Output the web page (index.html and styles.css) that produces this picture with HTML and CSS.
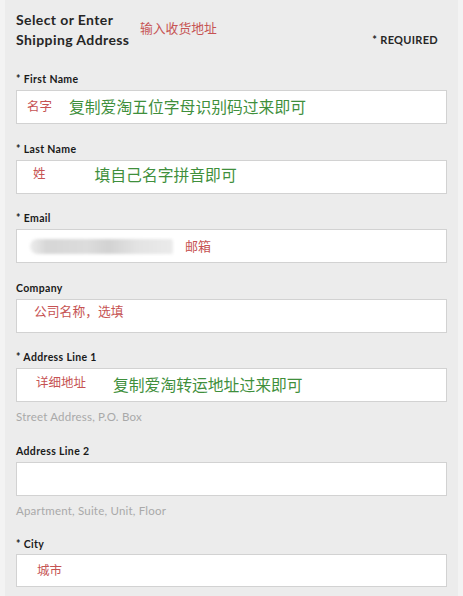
FILE: index.html
```html
<!DOCTYPE html>
<html lang="en">
<head>
<meta charset="utf-8">
<title>Shipping Address</title>
<link rel="stylesheet" href="styles.css">
</head>
<body>
<div class="panel">
  <div class="head">
    <div class="title">Select or Enter<br>Shipping Address</div>
    <span class="note head-note">输入收货地址</span>
    <span class="required">* REQUIRED</span>
  </div>

  <div class="field first">
    <div class="label">* First Name</div>
    <div class="box">
      <span class="note n-first">名字</span>
      <span class="tip t-first">复制爱淘五位字母识别码过来即可</span>
    </div>
  </div>

  <div class="field">
    <div class="label">* Last Name</div>
    <div class="box">
      <span class="note n-last">姓</span>
      <span class="tip t-last">填自己名字拼音即可</span>
    </div>
  </div>

  <div class="field">
    <div class="label">* Email</div>
    <div class="box">
      <span class="blurred"></span>
      <span class="note n-email">邮箱</span>
    </div>
  </div>

  <div class="field">
    <div class="label">Company</div>
    <div class="box">
      <span class="note n-company">公司名称，选填</span>
    </div>
  </div>

  <div class="field">
    <div class="label">* Address Line 1</div>
    <div class="box">
      <span class="note n-addr">详细地址</span>
      <span class="tip t-addr">复制爱淘转运地址过来即可</span>
    </div>
    <div class="hint">Street Address, P.O. Box</div>
  </div>

  <div class="field after-hint">
    <div class="label">Address Line 2</div>
    <div class="box"></div>
    <div class="hint">Apartment, Suite, Unit, Floor</div>
  </div>

  <div class="field after-hint last">
    <div class="label">* City</div>
    <div class="box">
      <span class="note n-city">城市</span>
    </div>
  </div>
</div>
</body>
</html>
```
FILE: styles.css
```css
* { box-sizing: border-box; }

html, body {
  margin: 0;
  padding: 0;
  background: #f3f3f3;
}

body {
  font-family: Lato, "Liberation Sans", "Noto Sans CJK SC", sans-serif;
  color: #1c1c1c;
  height: 596px;
  overflow: hidden;
}

.panel {
  margin: 0 5px;
  background: #ececec;
  padding: 10px 11px 20px;
  min-height: 596px;
}

.head {
  display: flex;
  align-items: flex-start;
  height: 40px;
}

.title {
  font-size: 14px;
  font-weight: 700;
  line-height: 20px;
  letter-spacing: 0.4px;
  color: #262626;
  width: 124px;
  white-space: nowrap;
}

.note {
  font-family: "Noto Sans CJK SC", sans-serif;
  color: #c65353;
  font-size: 12.5px;
  line-height: 16px;
}

.tip {
  font-family: "Noto Sans CJK SC", sans-serif;
  color: #3f8f3c;
  font-size: 15.8px;
  line-height: 20px;
}

.head-note {
  margin-top: 10px;
  font-size: 12.8px;
}

.required {
  margin-left: auto;
  margin-top: 23px;
  margin-right: 9px;
  font-size: 11px;
  font-weight: 700;
  letter-spacing: 0.3px;
  line-height: 14px;
  color: #262626;
}

.field {
  margin-top: 17.5px;
}

.field.first {
  margin-top: 22px;
}

.field.after-hint {
  margin-top: 20px;
}

.field.after-hint.last {
  margin-top: 19px;
}

.field.last .box {
  margin-top: 3px;
  height: 33px;
}

.label {
  font-size: 10.5px;
  font-weight: 700;
  line-height: 14px;
  letter-spacing: 0.35px;
  color: #1a1a1a;
}

.box {
  margin-top: 4px;
  height: 34px;
  background: #fff;
  border: 1px solid #d2d2d2;
  display: flex;
  align-items: center;
}

.hint {
  margin-top: 8px;
  font-size: 11.5px;
  line-height: 14px;
  letter-spacing: 0.2px;
  color: #a9a9a9;
}

.n-first { margin-left: 10px; margin-top: -2px; }
.t-first { margin-left: 17px; }

.n-last { margin-left: 16px; margin-top: -7px; }
.t-last { margin-left: 49px; margin-top: -4px; }

.blurred {
  margin-left: 13px;
  width: 143px;
  height: 15px;
  border-radius: 8px 2px 2px 8px;
  background: linear-gradient(90deg, #ececec 0%, #d6d6d6 12%, #dcdcdc 40%, #d2d2d2 55%, #e3e3e3 75%, #ebebeb 100%);
  filter: blur(1.5px);
}

.n-email { margin-left: 12px; font-size: 13px; }

.n-company { margin-left: 17px; margin-top: -9px; font-size: 12.8px; }

.n-addr { margin-left: 19px; margin-top: -7px; }
.t-addr { margin-left: 27px; }

.n-city { margin-left: 20px; margin-top: -1px; }
```
